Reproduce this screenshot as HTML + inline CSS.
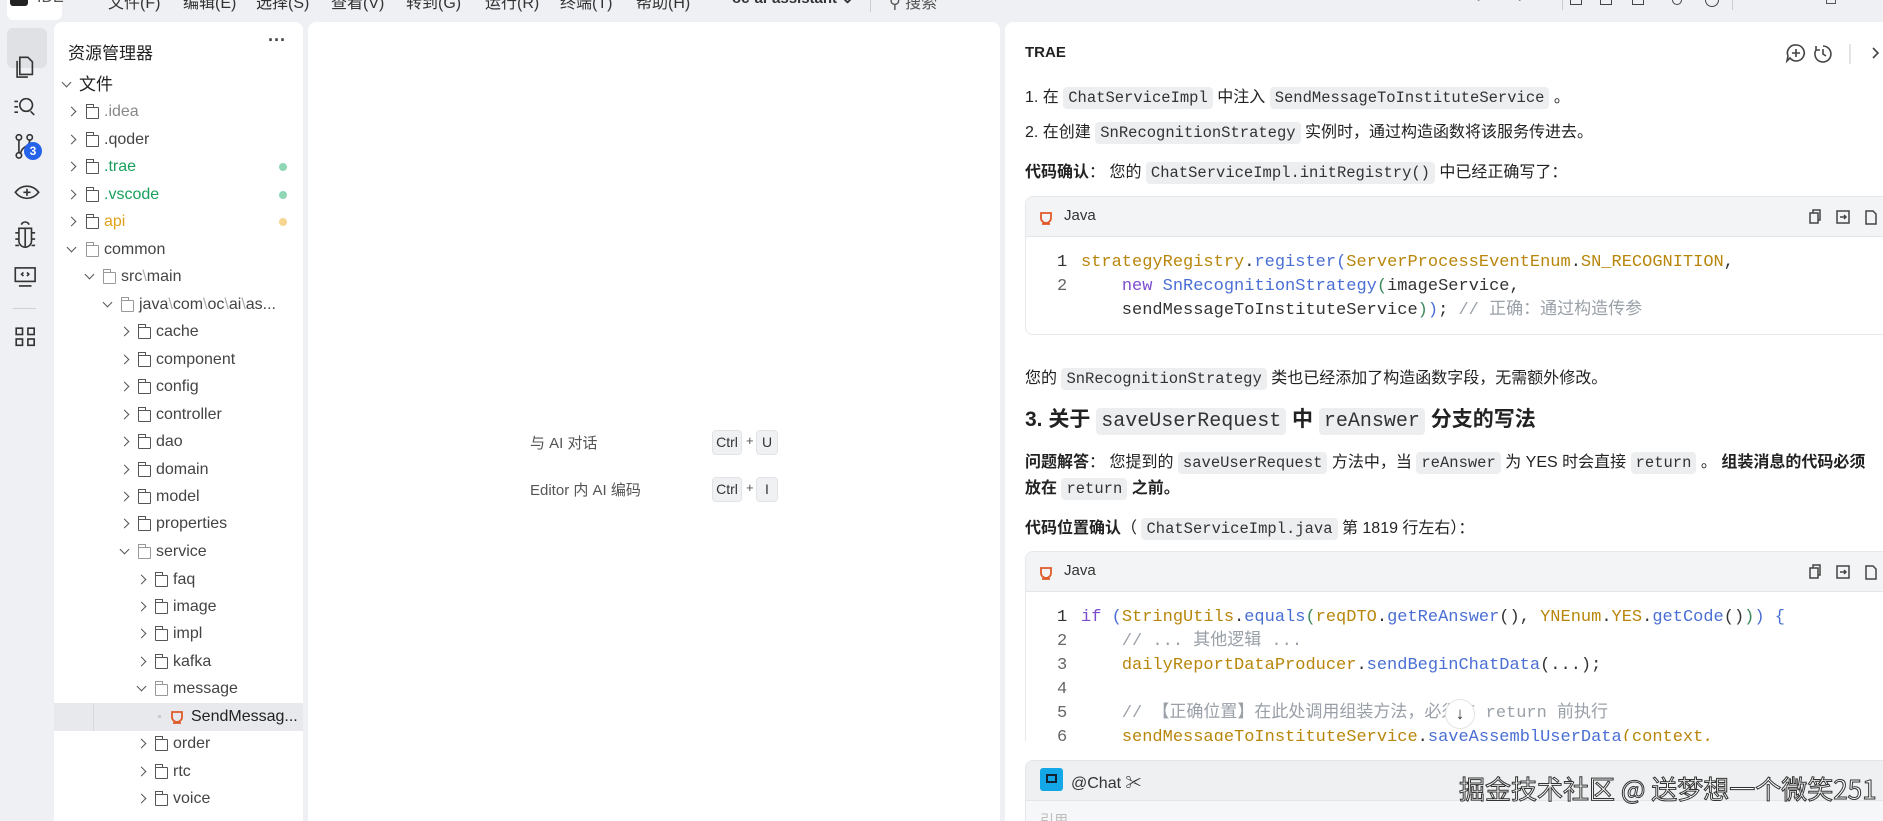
<!DOCTYPE html>
<html style="width:1883px;height:821px;overflow:hidden"><head><meta charset="utf-8"><style>
*{margin:0;padding:0;box-sizing:border-box}
body{width:1883px;height:821px;overflow:hidden;background:#eef0f3;font-family:"Liberation Sans","Noto Sans CJK SC",sans-serif;color:#222;position:relative}
.a{position:absolute;white-space:nowrap}
.panel{position:absolute;background:#fff;border-radius:8px 8px 0 0;top:22px;bottom:0;overflow:hidden}
.menu{top:-11px;font-size:16px;color:#333}
.row{position:absolute;height:27px;line-height:27px;font-size:16px;color:#444;white-space:nowrap}
.chev{position:absolute;width:7px;height:7px;border-right:1.4px solid #555;border-bottom:1.4px solid #555;top:10px}
.chev.r{transform:rotate(-45deg)}
.chev.d{transform:rotate(45deg);top:8px}
.fold{position:absolute;width:13px;height:12px;border:1.3px solid #555;border-radius:1px;top:9px}
.fold:before{content:"";position:absolute;left:-1px;top:-4px;width:6px;height:3px;border:1.3px solid #555;border-bottom:none}
.fold.o{border-color:#999}.fold.o:before{border-color:#999}
.dot{position:absolute;left:279px;width:8px;height:8px;border-radius:50%;top:10px}
.chat{font-size:16px;color:#222}
code{font-family:"Liberation Mono","Noto Sans CJK SC",monospace;background:#eceef0;border-radius:4px;padding:2px 5px;font-size:15.5px;color:#333}
.cb{position:absolute;left:1025px;right:-20px;border:1px solid #e6e8eb;border-radius:8px;overflow:hidden;background:#fff}
.cbh{height:40px;background:#f3f4f5;border-bottom:1px solid #e3e5e8;position:relative;font-size:15px;color:#333}
.cl{position:absolute;font-family:"Liberation Mono","Noto Sans CJK SC",monospace;font-size:17px;line-height:24px;height:24px;white-space:pre;color:#333}
.n{color:#333;display:inline-block;width:24px}
.y{color:#b8860b}.b{color:#4a6fd4}.p{color:#7c4dce}.g{color:#9aa0a8}.gr{color:#3a8a5c}
</style></head><body>

<!-- top bar -->
<div class="a" style="left:7px;top:-8px;width:55px;height:28px;background:#fff;border-radius:6px"></div>
<div class="a" style="left:10px;top:-8px;width:18px;height:14px;background:#222;border-radius:3px"></div>
<div class="a menu" style="left:37px;color:#555">IDE</div>
<div class="a menu" style="left:108px">文件(F)</div>
<div class="a menu" style="left:183px">编辑(E)</div>
<div class="a menu" style="left:256px">选择(S)</div>
<div class="a menu" style="left:331px">查看(V)</div>
<div class="a menu" style="left:406px">转到(G)</div>
<div class="a menu" style="left:485px">运行(R)</div>
<div class="a menu" style="left:560px">终端(T)</div>
<div class="a menu" style="left:636px">帮助(H)</div>
<div class="a menu" style="left:732px;font-weight:bold;font-size:15px">oc-ai-assistant ⌄</div>
<div class="a" style="left:870px;top:-2px;width:1px;height:14px;background:#ccc"></div>
<div class="a menu" style="left:889px;color:#555">⚲ 搜索</div>
<div class="a menu" style="left:1475px;color:#888">‹</div>
<div class="a menu" style="left:1518px;color:#888">›</div>
<div class="a" style="left:1562px;top:-2px;width:1px;height:12px;background:#ccc"></div>
<div class="a" style="left:1570px;top:-5px;width:12px;height:10px;border:1.5px solid #444"></div>
<div class="a" style="left:1600px;top:-5px;width:12px;height:10px;border:1.5px solid #444"></div>
<div class="a" style="left:1632px;top:-5px;width:12px;height:10px;border:1.5px solid #444"></div>
<div class="a" style="left:1672px;top:-5px;width:10px;height:10px;border:1.5px solid #444;border-radius:50%"></div>
<div class="a" style="left:1705px;top:-7px;width:14px;height:14px;border:1.5px solid #444;border-radius:50%"></div>
<div class="a" style="left:1732px;top:-2px;width:1px;height:12px;background:#ccc"></div>
<div class="a" style="left:1826px;top:-4px;width:10px;height:8px;border:1.5px solid #555"></div>

<!-- activity bar -->
<div class="a" style="left:7px;top:28px;width:40px;height:40px;background:#dfe1e5;border-radius:6px"></div>
<svg class="a" style="left:0;top:20px" width="54" height="350" viewBox="0 0 60 350" fill="none" stroke="#333" stroke-width="1.8">
<path d="M22 22h9l5 5v14h-14z M19 26v18h12"/>
<path d="M16 71h4M16 77h4M16 83h4M29 68a7 7 0 1 0 0.1 0M34 82l4 4"/>
<circle cx="21" cy="111" r="3"/><circle cx="33" cy="111" r="3"/><circle cx="21" cy="131" r="3"/><path d="M21 114v14M33 114c0 8-8 6-10 14"/>
<path d="M17 172c7-9 19-9 26 0c-7 9-19 9-26 0z M30 168v8M26 172h8"/>
<path d="M21 212h14v14a7 7 0 0 1-14 0z M28 212v20M24 208a4 3 0 0 1 8 0M17 217h4M35 217h4M17 224h4M35 224h4M17 231h4M35 231h4"/>
<rect x="17" y="256" width="22" height="15"/><path d="M21 276h14M26 261l-2 2 2 2M30 261l2 2-2 2"/>
<path d="M14 301h26" stroke="#ccc" stroke-width="1"/>
<rect x="18" y="323" width="7" height="7"/><rect x="31" y="323" width="7" height="7"/><rect x="18" y="335" width="7" height="7"/><rect x="31" y="335" width="7" height="7"/>
</svg>
<div class="a" style="left:24px;top:142px;width:18px;height:18px;border-radius:50%;background:#2563eb;color:#fff;font-size:12px;font-weight:bold;text-align:center;line-height:18px">3</div>

<!-- sidebar -->
<div class="panel" style="left:54px;width:249px"></div>
<div class="a" style="left:68px;top:39px;font-size:17px;color:#222">资源管理器</div>
<div class="a" style="left:268px;top:30px;font-size:18px;font-weight:bold;color:#444">···</div>
<div class="row" style="top:71px;left:60px"><span class="chev d" style="left:3px"></span><span style="position:absolute;left:19px;font-size:17px;color:#222">文件</span></div>

<div class="row" style="top:98px;left:0;width:300px">
<span class="chev r" style="left:68px"></span><span class="fold" style="left:86px"></span><span style="position:absolute;left:104px;color:#888">.idea</span></div>
<div class="row" style="top:126px;left:0"><span class="chev r" style="left:68px"></span><span class="fold" style="left:86px"></span><span style="position:absolute;left:104px">.qoder</span></div>
<div class="row" style="top:153px;left:0;width:300px"><span class="chev r" style="left:68px"></span><span class="fold" style="left:86px"></span><span style="position:absolute;left:104px;color:#1aa05c">.trae</span><span class="dot" style="background:#8fd6b4"></span></div>
<div class="row" style="top:181px;left:0;width:300px"><span class="chev r" style="left:68px"></span><span class="fold" style="left:86px"></span><span style="position:absolute;left:104px;color:#1aa05c">.vscode</span><span class="dot" style="background:#8fd6b4"></span></div>
<div class="row" style="top:208px;left:0;width:300px"><span class="chev r" style="left:68px"></span><span class="fold" style="left:86px"></span><span style="position:absolute;left:104px;color:#e0a21a">api</span><span class="dot" style="background:#f5d58f"></span></div>
<div class="row" style="top:236px;left:0"><span class="chev d" style="left:68px"></span><span class="fold o" style="left:86px"></span><span style="position:absolute;left:104px">common</span></div>
<div class="row" style="top:263px;left:0"><span class="chev d" style="left:86px"></span><span class="fold o" style="left:103px"></span><span style="position:absolute;left:121px">src<span style="color:#aaa">\</span>main</span></div>
<div class="row" style="top:291px;left:0"><span class="chev d" style="left:104px"></span><span class="fold o" style="left:121px"></span><span style="position:absolute;left:139px">java<span style="color:#aaa">\</span>com<span style="color:#aaa">\</span>oc<span style="color:#aaa">\</span>ai<span style="color:#aaa">\</span>as...</span></div>

<div class="row" style="top:318px"><span class="chev r" style="left:121px"></span><span class="fold" style="left:138px"></span><span style="position:absolute;left:156px">cache</span></div>
<div class="row" style="top:346px"><span class="chev r" style="left:121px"></span><span class="fold" style="left:138px"></span><span style="position:absolute;left:156px">component</span></div>
<div class="row" style="top:373px"><span class="chev r" style="left:121px"></span><span class="fold" style="left:138px"></span><span style="position:absolute;left:156px">config</span></div>
<div class="row" style="top:401px"><span class="chev r" style="left:121px"></span><span class="fold" style="left:138px"></span><span style="position:absolute;left:156px">controller</span></div>
<div class="row" style="top:428px"><span class="chev r" style="left:121px"></span><span class="fold" style="left:138px"></span><span style="position:absolute;left:156px">dao</span></div>
<div class="row" style="top:456px"><span class="chev r" style="left:121px"></span><span class="fold" style="left:138px"></span><span style="position:absolute;left:156px">domain</span></div>
<div class="row" style="top:483px"><span class="chev r" style="left:121px"></span><span class="fold" style="left:138px"></span><span style="position:absolute;left:156px">model</span></div>
<div class="row" style="top:510px"><span class="chev r" style="left:121px"></span><span class="fold" style="left:138px"></span><span style="position:absolute;left:156px">properties</span></div>
<div class="row" style="top:538px"><span class="chev d" style="left:121px"></span><span class="fold o" style="left:138px"></span><span style="position:absolute;left:156px">service</span></div>
<div class="row" style="top:566px"><span class="chev r" style="left:138px"></span><span class="fold" style="left:155px"></span><span style="position:absolute;left:173px">faq</span></div>
<div class="row" style="top:593px"><span class="chev r" style="left:138px"></span><span class="fold" style="left:155px"></span><span style="position:absolute;left:173px">image</span></div>
<div class="row" style="top:620px"><span class="chev r" style="left:138px"></span><span class="fold" style="left:155px"></span><span style="position:absolute;left:173px">impl</span></div>
<div class="row" style="top:648px"><span class="chev r" style="left:138px"></span><span class="fold" style="left:155px"></span><span style="position:absolute;left:173px">kafka</span></div>
<div class="row" style="top:675px"><span class="chev d" style="left:138px"></span><span class="fold o" style="left:155px"></span><span style="position:absolute;left:173px">message</span></div>
<div class="a" style="left:54px;top:703px;width:249px;height:28px;background:#e8e9ec"></div>
<div class="a" style="left:93px;top:703px;width:1px;height:28px;background:#d6d8dc"></div>
<div class="row" style="top:703px"><span style="position:absolute;left:158px;top:12px;width:3px;height:3px;background:#ccc"></span><svg style="position:absolute;left:169px;top:6px" width="16" height="16" fill="none" stroke="#e05a2a" stroke-width="1.8"><path d="M3 3h10v5a5 5 0 0 1-10 0z M4 14h8"/></svg><span style="position:absolute;left:191px;color:#222">SendMessag...</span></div>
<div class="row" style="top:730px"><span class="chev r" style="left:138px"></span><span class="fold" style="left:155px"></span><span style="position:absolute;left:173px">order</span></div>
<div class="row" style="top:758px"><span class="chev r" style="left:138px"></span><span class="fold" style="left:155px"></span><span style="position:absolute;left:173px">rtc</span></div>
<div class="row" style="top:785px"><span class="chev r" style="left:138px"></span><span class="fold" style="left:155px"></span><span style="position:absolute;left:173px">voice</span></div>

<!-- editor -->
<div class="panel" style="left:308px;width:692px"></div>
<div class="a" style="left:530px;top:432px;font-size:15px;color:#555">与 AI 对话</div>
<div class="a" style="left:712px;top:430px;height:25px;width:30px;background:#f0f1f3;border:1px solid #e2e3e6;border-radius:4px;font-size:14px;text-align:center;line-height:23px;color:#333">Ctrl</div>
<div class="a" style="left:746px;top:433px;font-size:13px;color:#555">+</div>
<div class="a" style="left:756px;top:430px;height:25px;width:22px;background:#f0f1f3;border:1px solid #e2e3e6;border-radius:4px;font-size:14px;text-align:center;line-height:23px;color:#333">U</div>
<div class="a" style="left:530px;top:479px;font-size:15px;color:#555">Editor 内 AI 编码</div>
<div class="a" style="left:712px;top:477px;height:25px;width:30px;background:#f0f1f3;border:1px solid #e2e3e6;border-radius:4px;font-size:14px;text-align:center;line-height:23px;color:#333">Ctrl</div>
<div class="a" style="left:746px;top:480px;font-size:13px;color:#555">+</div>
<div class="a" style="left:756px;top:477px;height:25px;width:22px;background:#f0f1f3;border:1px solid #e2e3e6;border-radius:4px;font-size:14px;text-align:center;line-height:23px;color:#333">I</div>

<!-- chat panel -->
<div class="panel" style="left:1005px;width:900px"></div>
<div class="a" style="left:1025px;top:44px;font-size:15px;font-weight:bold;color:#222">TRAE</div>
<svg class="a" style="left:1785px;top:40px" width="98" height="26" fill="none" stroke="#444" stroke-width="1.6">
<path d="M11 5a8 8 0 1 1-6 13l-3 3 1-5a8 8 0 0 1 8-11z M11 9v8M7 13h8"/>
<path d="M38 6a8 8 0 1 1-7 4M31 6v4h4M38 9v5l3 2"/>
<path d="M65 4v20" stroke="#ddd"/>
<path d="M88 8l5 5-5 5"/>
</svg>
<div class="a chat" style="left:1025px;top:83px">1. 在 <code>ChatServiceImpl</code> 中注入 <code>SendMessageToInstituteService</code> 。</div>
<div class="a chat" style="left:1025px;top:118px">2. 在创建 <code>SnRecognitionStrategy</code> 实例时，通过构造函数将该服务传进去。</div>
<div class="a chat" style="left:1025px;top:158px"><b>代码确认</b>：  您的 <code>ChatServiceImpl.initRegistry()</code> 中已经正确写了：</div>

<div class="cb" style="top:196px;height:139px">
<div class="cbh"><svg style="position:absolute;left:12px;top:13px" width="16" height="16" fill="none" stroke="#e05a2a" stroke-width="1.8"><path d="M3 3h10v5a5 5 0 0 1-10 0z M4 14h8"/></svg><span style="position:absolute;left:38px;top:10px">Java</span>
<svg style="position:absolute;left:780px;top:11px" width="80" height="18" fill="none" stroke="#444" stroke-width="1.5"><rect x="4" y="5" width="8" height="10"/><path d="M7 5V2h7v10h-2"/><rect x="31" y="3" width="12" height="12"/><path d="M34 9h6M38 7l2 2-2 2"/><path d="M60 3h7l3 3v10h-10z"/></svg></div>
<div class="cl" style="left:31px;top:54px"><span class="n">1</span><span class="y">strategyRegistry</span>.<span class="b">register</span><span class="b">(</span><span class="y">ServerProcessEventEnum</span>.<span class="y">SN_RECOGNITION</span>,</div>
<div class="cl" style="left:31px;top:78px"><span class="n" style="color:#666">2</span>    <span class="p">new</span> <span class="b">SnRecognitionStrategy</span><span class="gr">(</span>imageService,</div>
<div class="cl" style="left:31px;top:102px"><span class="n"></span>    sendMessageToInstituteService<span class="gr">)</span><span class="b">)</span>; <span class="g">// 正确：通过构造传参</span></div>
</div>

<div class="a chat" style="left:1025px;top:364px">您的 <code>SnRecognitionStrategy</code> 类也已经添加了构造函数字段，无需额外修改。</div>
<div class="a" style="left:1025px;top:403px;font-size:21px;font-weight:bold">3. 关于 <code style="font-size:20px;font-weight:normal">saveUserRequest</code> 中 <code style="font-size:20px;font-weight:normal">reAnswer</code> 分支的写法</div>
<div class="a chat" style="left:1025px;top:448px"><b>问题解答</b>：  您提到的 <code>saveUserRequest</code> 方法中，当 <code>reAnswer</code> 为 YES 时会直接 <code>return</code> 。 <b>组装消息的代码必须</b></div>
<div class="a chat" style="left:1025px;top:474px"><b>放在 <code style="font-weight:normal">return</code> 之前。</b></div>
<div class="a chat" style="left:1025px;top:514px"><b>代码位置确认</b>（ <code>ChatServiceImpl.java</code> 第 1819 行左右）：</div>

<div class="cb" style="top:551px;height:190px;border-bottom:none;border-radius:8px 8px 0 0">
<div class="cbh"><svg style="position:absolute;left:12px;top:13px" width="16" height="16" fill="none" stroke="#e05a2a" stroke-width="1.8"><path d="M3 3h10v5a5 5 0 0 1-10 0z M4 14h8"/></svg><span style="position:absolute;left:38px;top:10px">Java</span>
<svg style="position:absolute;left:780px;top:11px" width="80" height="18" fill="none" stroke="#444" stroke-width="1.5"><rect x="4" y="5" width="8" height="10"/><path d="M7 5V2h7v10h-2"/><rect x="31" y="3" width="12" height="12"/><path d="M34 9h6M38 7l2 2-2 2"/><path d="M60 3h7l3 3v10h-10z"/></svg></div>
<div class="cl" style="left:31px;top:54px"><span class="n">1</span><span class="p">if</span> <span class="b">(</span><span class="y">StringUtils</span>.<span class="b">equals</span><span class="gr">(</span><span class="y">reqDTO</span>.<span class="b">getReAnswer</span>(), <span class="y">YNEnum</span>.<span class="y">YES</span>.<span class="b">getCode</span>()<span class="gr">)</span><span class="b">)</span> <span class="b">{</span></div>
<div class="cl" style="left:31px;top:78px"><span class="n" style="color:#666">2</span>    <span class="g">// ... 其他逻辑 ...</span></div>
<div class="cl" style="left:31px;top:102px"><span class="n" style="color:#666">3</span>    <span class="y">dailyReportDataProducer</span>.<span class="b">sendBeginChatData</span>(...);</div>
<div class="cl" style="left:31px;top:126px"><span class="n" style="color:#666">4</span></div>
<div class="cl" style="left:31px;top:150px"><span class="n" style="color:#666">5</span>    <span class="g">// 【正确位置】在此处调用组装方法，必须在 return 前执行</span></div>
<div class="cl" style="left:31px;top:174px"><span class="n" style="color:#666">6</span>    <span class="y">sendMessageToInstituteService</span>.<span class="b">saveAssemblUserData</span><span class="y">(context,</span></div>
</div>
<div class="a" style="left:1445px;top:699px;width:30px;height:30px;border-radius:50%;background:#fff;border:1px solid #e4e4e4;text-align:center;line-height:28px;font-size:17px;color:#333">↓</div>

<!-- chat input -->
<div class="a" style="left:1025px;top:760px;width:880px;height:80px;background:#f6f7f8;border:1px solid #e3e5e8;border-radius:8px"></div>
<div class="a" style="left:1026px;top:761px;width:878px;height:40px;background:#eef0f2;border-bottom:1px solid #e3e5e8;border-radius:8px 8px 0 0"></div>
<div class="a" style="left:1040px;top:768px;width:23px;height:23px;background:#13a7e8;border-radius:3px"></div>
<div class="a" style="left:1046px;top:774px;width:11px;height:9px;border:2px solid #123"></div>
<div class="a" style="left:1071px;top:769px;font-size:16px;color:#333">@Chat ✂</div>
<div class="a" style="left:1040px;top:810px;font-size:14px;color:#bbb">引用...</div>
<div class="a" style="left:1459px;top:770px;font-size:26px;color:#fff;-webkit-text-stroke:1px #333;font-family:'Noto Sans CJK SC',sans-serif">掘金技术社区 @ 送梦想一个微笑251</div>
</body></html>
